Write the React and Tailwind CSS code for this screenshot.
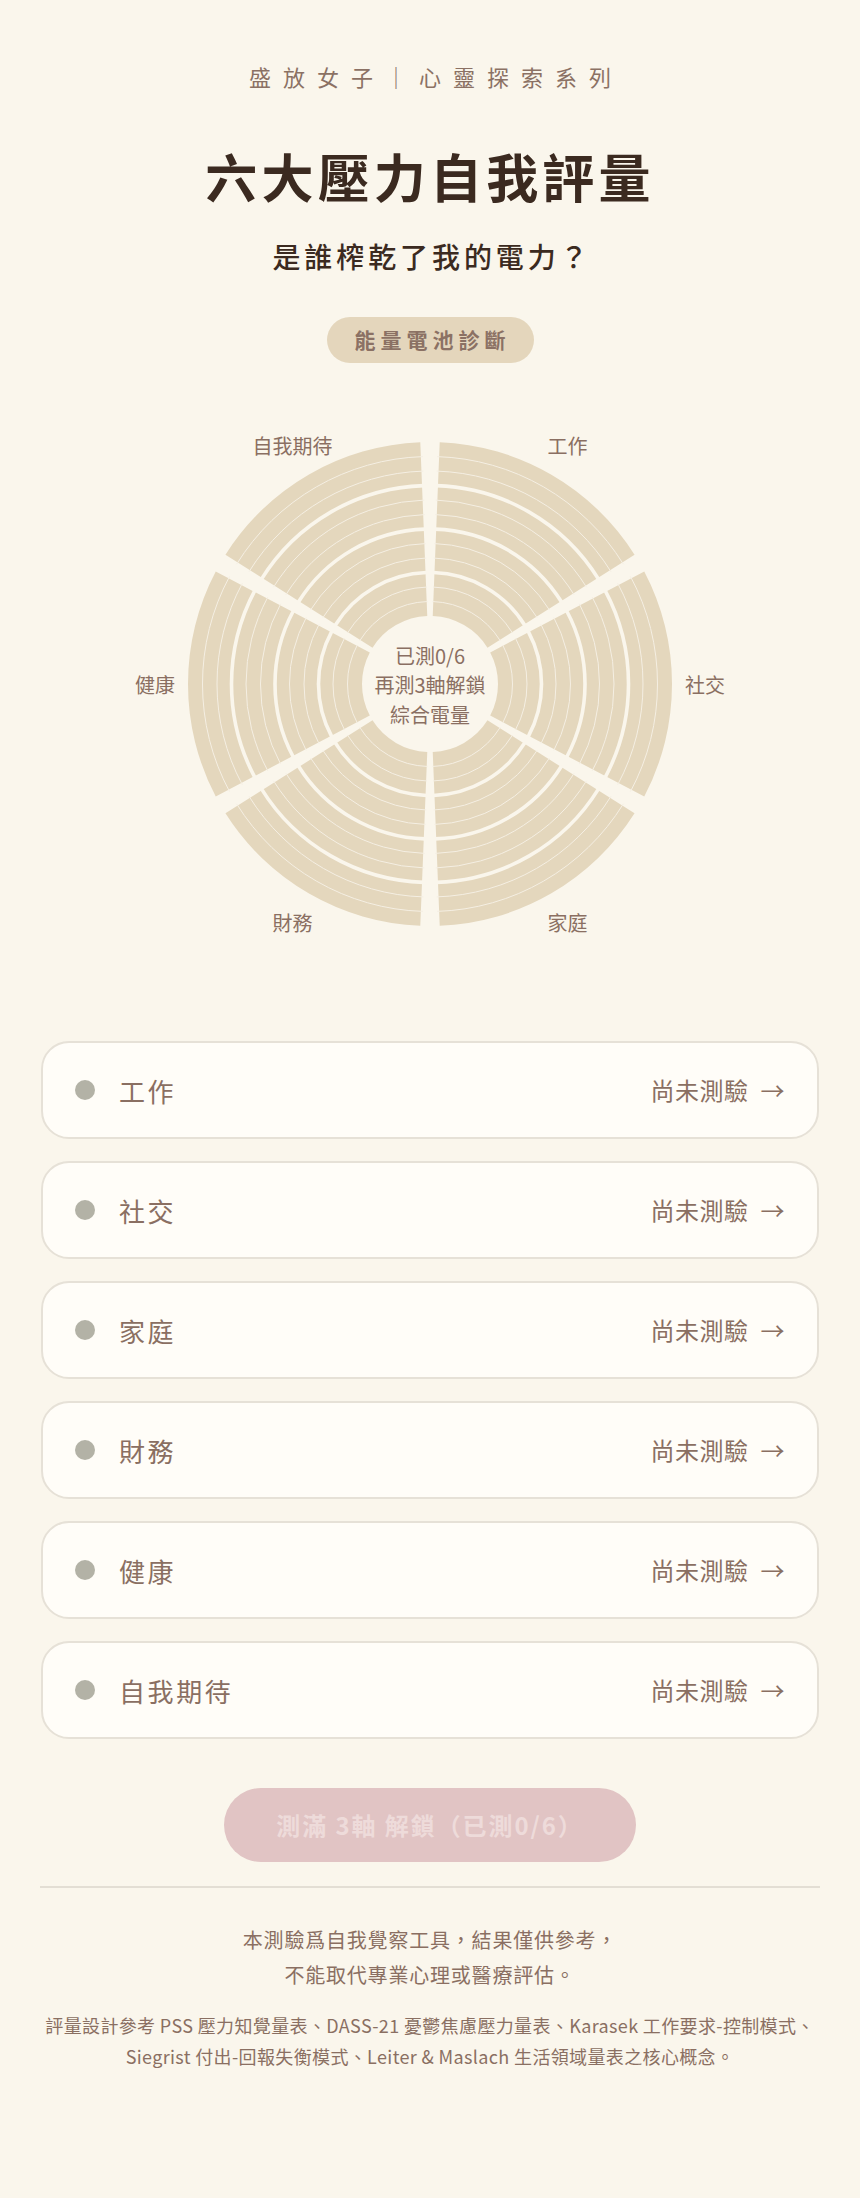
import React from 'react';

const AXES = ['工作', '社交', '家庭', '財務', '健康', '自我期待'];

const BG = '#faf6ec';
const SECTOR = '#e4d7bd';

const pt = (cx, cy, r, deg) => {
    const a = (deg * Math.PI) / 180;
    return [cx + r * Math.sin(a), cy - r * Math.cos(a)];
};

const sectorPath = (cx, cy, r0, r1, a0, a1) => {
    const [x1, y1] = pt(cx, cy, r1, a0);
    const [x2, y2] = pt(cx, cy, r1, a1);
    const [x3, y3] = pt(cx, cy, r0, a1);
    const [x4, y4] = pt(cx, cy, r0, a0);
    return `M${x1} ${y1} A${r1} ${r1} 0 0 1 ${x2} ${y2} L${x3} ${y3} A${r0} ${r0} 0 0 0 ${x4} ${y4} Z`;
};

const arcPath = (cx, cy, r, a0, a1) => {
    const [x1, y1] = pt(cx, cy, r, a0);
    const [x2, y2] = pt(cx, cy, r, a1);
    return `M${x1} ${y1} A${r} ${r} 0 0 1 ${x2} ${y2}`;
};

const EnergyWheel = () => {
    const cx = 320;
    const cy = 280;
    const r0 = 68;
    const r1 = 242;
    const levels = 12;
    const step = (r1 - r0) / levels;
    const pad = 2.3;

    return (
        <svg width="640" height="560" viewBox="0 0 640 560" className="block">
            {AXES.map((name, i) => {
                const a0 = i * 60 + pad;
                const a1 = (i + 1) * 60 - pad;
                const mid = i * 60 + 30;
                const [lx, ly] = pt(cx, cy, 275, mid);
                const rings = [];
                for (let k = 1; k < levels; k++) {
                    const r = r0 + k * step;
                    const thick = k % 3 === 0;
                    rings.push(
                        <path
                            key={k}
                            d={arcPath(cx, cy, r, a0 - 0.5, a1 + 0.5)}
                            fill="none"
                            stroke={thick ? BG : '#f5efe3'}
                            strokeWidth={thick ? 3.6 : 1}
                        />
                    );
                }
                return (
                    <g key={name}>
                        <path d={sectorPath(cx, cy, r0, r1, a0, a1)} fill={SECTOR} />
                        {rings}
                        <text
                            x={lx}
                            y={ly}
                            textAnchor="middle"
                            dominantBaseline="central"
                            fontSize="20"
                            fill="#8a6f62"
                        >
                            {name}
                        </text>
                    </g>
                );
            })}
            {/* Center text */}
            <text x={cx} y={cy - 29} textAnchor="middle" dominantBaseline="central" fontSize="20" fill="#8a6f62">已測0/6</text>
            <text x={cx} y={cy} textAnchor="middle" dominantBaseline="central" fontSize="20" fill="#8a6f62">再測3軸解鎖</text>
            <text x={cx} y={cy + 30} textAnchor="middle" dominantBaseline="central" fontSize="20" fill="#8a6f62">綜合電量</text>
        </svg>
    );
};

const App = () => {
    return (
        <div className="min-h-screen bg-[#faf6ec] font-['Noto_Sans_CJK_TC','Noto_Sans',sans-serif] text-[#8a6f62]">
            <div className="flex flex-col items-center pt-[60px]">
                {/* Brand */}
                <div className="h-[32px] pl-[12px] text-[22px] leading-[32px] tracking-[12px] text-[#8b7164]">
                    盛放女子｜心靈探索系列
                </div>

                {/* Title */}
                <h1 className="mt-[52px] h-[64px] text-[52px] font-bold leading-[64px] tracking-[0.08em] text-[#3b2a20]">
                    六大壓力自我評量
                </h1>
                <p className="mt-[28px] h-[40px] pl-[4px] text-[28px] font-medium leading-[40px] tracking-[0.14em] text-[#3b2a20]">
                    是誰榨乾了我的電力？
                </p>

                {/* Pill */}
                <div className="mt-[41px] flex h-[46px] items-center rounded-full bg-[#e4d6bc] pl-[28px] pr-[23px] text-[21px] font-bold tracking-[5px] text-[#8b7164]">
                    能量電池診斷
                </div>

                {/* Wheel */}
                <div className="mt-[41px]">
                    <EnergyWheel />
                </div>
            </div>

            {/* Axis cards */}
            <div className="mt-[77px] flex flex-col gap-[22px] px-[41px]">
                {AXES.map((name) => (
                    <div
                        key={name}
                        className="flex h-[98px] items-center rounded-[28px] border-2 border-[#e6e1d7] bg-[#fffdf8] px-8"
                    >
                        <span className="h-5 w-5 shrink-0 rounded-full bg-[#b3b2a6]"></span>
                        <span className="ml-6 text-[26px] tracking-[0.1em] text-[#8a6f62]">{name}</span>
                        <span className="ml-auto flex items-center text-[24px] tracking-[0.02em] text-[#8a6f62]">
                            尚未測驗<span className="ml-[12px]">→</span>
                        </span>
                    </div>
                ))}
            </div>

            {/* Unlock button */}
            <div className="mt-[49px] flex justify-center">
                <button className="h-[74px] w-[412px] rounded-full bg-[#e1c4c4] text-[24px] font-bold tracking-[0.08em] text-[#eedbda]">
                    測滿 3軸 解鎖（已測0/6）
                </button>
            </div>

            <div className="mx-10 mt-[24px] h-[2px] bg-[#e3ded4]"></div>

            {/* Disclaimer */}
            <div className="mt-[34px] text-center text-[20px] leading-[35px] tracking-[0.04em] text-[#8a6f62]">
                <p>本測驗爲自我覺察工具，結果僅供參考，</p>
                <p>不能取代專業心理或醫療評估。</p>
            </div>
            <div className="mt-[18px] pb-[120px] text-center text-[18px] leading-[31px] tracking-[0.02em] text-[#8a6f62]">
                <p className="whitespace-nowrap">評量設計參考 PSS 壓力知覺量表、DASS-21 憂鬱焦慮壓力量表、Karasek 工作要求-控制模式、</p>
                <p className="whitespace-nowrap">Siegrist 付出-回報失衡模式、Leiter &amp; Maslach 生活領域量表之核心概念。</p>
            </div>
        </div>
    );
};

export default App;
